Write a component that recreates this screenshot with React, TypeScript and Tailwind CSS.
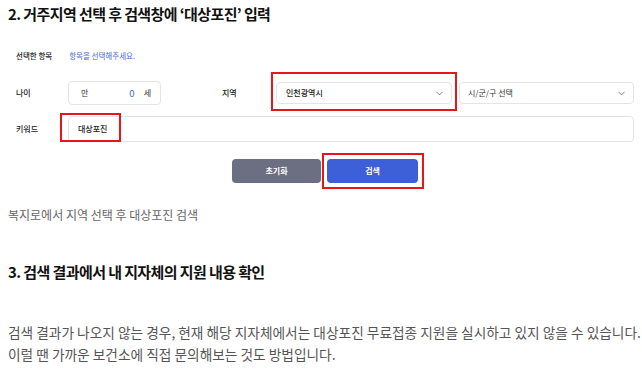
import { ChevronDown } from "lucide-react";

const KR = "font-['Noto_Sans_CJK_KR','Noto_Sans',sans-serif]";

const Chevron = () => <ChevronDown size={11} strokeWidth={2} className="text-[#777]" />;

const App = () => {
  return (
    <div className={`w-[642px] h-[385px] bg-white overflow-hidden px-2 ${KR}`}>
      <h2 className="pt-[3px] text-[15px] leading-[22px] font-bold tracking-[-0.6px] text-[#111]">
        2. 거주지역 선택 후 검색창에 ‘대상포진’ 입력
      </h2>

      {/* form screenshot */}
      <div className="pl-2 pt-[24px] w-[626px]">
        <div className="flex items-center h-[14px] text-[7.5px] gap-[17px]">
          <span className="text-[#222] font-medium">선택한 항목</span>
          <span className="text-[#4a6adf]">항목을 선택해주세요.</span>
        </div>

        <div className="flex items-center mt-[18px] h-[24px] text-[8px]">
          <span className="w-[52px] text-[#222] font-medium">나이</span>
          <div className="w-[93px] h-[24px] border border-[#e3e4e8] rounded-[4px] flex items-center pl-3 pr-[9px]">
            <span className="text-[#333]">만</span>
            <span className="ml-auto text-[#3f64e0] text-[9.5px]">0</span>
            <span className="ml-[9px] text-[#333]">세</span>
          </div>
          <span className="ml-[61px] w-[54px] text-[#222] font-medium">지역</span>
          <div className="relative w-[176px] h-[22px]">
            <div className="h-full border border-[#e3e4e8] rounded-[4px] flex items-center justify-between pl-[9px] pr-[6px]">
              <span className="text-[#222] font-medium">인천광역시</span>
              <Chevron />
            </div>
            <div className="absolute -left-[5px] -right-[5px] -top-[10px] -bottom-[7px] border-2 border-[#e8161b]" />
          </div>
          <div className="ml-[7px] flex-1 h-[22px] border border-[#e3e4e8] rounded-[4px] flex items-center justify-between pl-[8px] pr-[6px]">
            <span className="text-[#333]">시/군/구 선택</span>
            <Chevron />
          </div>
        </div>

        <div className="flex items-center mt-[11px] h-[26px] text-[8px]">
          <span className="w-[52px] text-[#222] font-medium">키워드</span>
          <div className="relative flex-1 h-[26px] border border-[#e3e4e8] rounded-[4px] flex items-center pl-[9px]">
            <span className="text-[#222] font-medium">대상포진</span>
            <div className="absolute -left-[9px] w-[61px] -top-[4px] -bottom-[1px] border-2 border-[#e8161b]" />
          </div>
        </div>

        <div className="flex justify-center gap-[6px] mt-[17px] text-[8px] font-bold text-white">
          <button className="w-[89px] h-[24px] rounded-[4px] bg-[#6c6e82]">초기화</button>
          <div className="relative">
            <button className="w-[91px] h-[24px] rounded-[4px] bg-[#3d5fd8]">검색</button>
            <div className="absolute -left-[5px] -right-[6px] -top-[6px] -bottom-[6px] border-2 border-[#e8161b]" />
          </div>
        </div>
      </div>

      <p className="mt-[24px] text-[12px] leading-[16px] text-[#666]">
        복지로에서 지역 선택 후 대상포진 검색
      </p>

      <h3 className="mt-[38px] text-[15px] leading-[22px] font-bold tracking-[-0.6px] text-[#111]">
        3. 검색 결과에서 내 지자체의 지원 내용 확인
      </h3>

      <p className="mt-[38px] text-[13.7px] leading-[22px] text-[#555] whitespace-nowrap">
        검색 결과가 나오지 않는 경우, 현재 해당 지자체에서는 대상포진 무료접종 지원을 실시하고 있지 않을 수 있습니다.
        <br />
        이럴 땐 가까운 보건소에 직접 문의해보는 것도 방법입니다.
      </p>
    </div>
  );
};

export default App;
